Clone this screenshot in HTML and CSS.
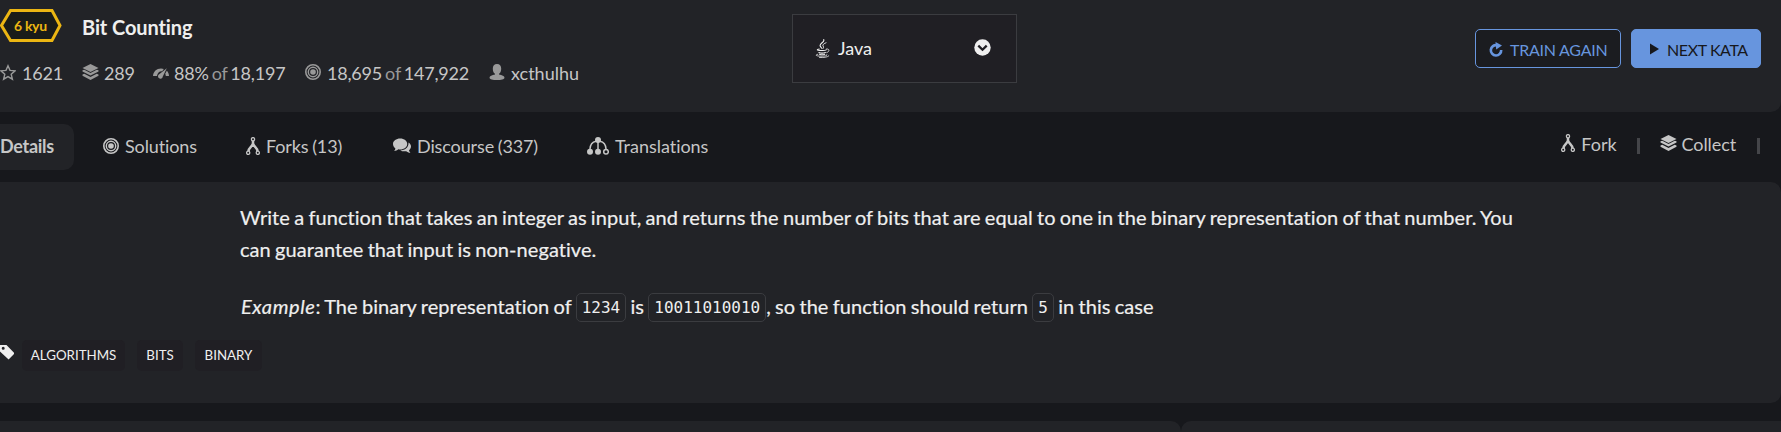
FILE: index.html
```html
<!DOCTYPE html>
<html lang="en">
<head>
<meta charset="utf-8">
<title>Bit Counting</title>
<link rel="stylesheet" href="styles.css">
</head>
<body>
<svg class="defs" width="0" height="0">
  <symbol id="layers" viewBox="0 0 17 16"><path d="M8.500 0L16.500 4L8.500 8L.5 4Z"/><path d="M.5 6.300L2.300 5.700L8.500 8.900L14.700 5.700L16.500 6.300V7.500L8.500 11.500L.5 7.500Z"/><path d="M.5 10.500L2.300 9.700L8.500 12.900L14.700 9.700L16.500 10.500V11.800L8.500 16L.5 11.800Z"/></symbol>
  <symbol id="target" viewBox="0 0 16 16"><g fill="none" stroke="currentColor"><circle cx="8" cy="8" r="7.200" stroke-width="1.600"/><circle cx="8" cy="8" r="4.700" stroke-width="1.400"/></g><circle cx="8" cy="8" r="2.800"/></symbol>
  <symbol id="fork" viewBox="0 0 14 18"><g fill="none" stroke="currentColor"><circle cx="7" cy="2.200" r="1.600" stroke-width="1.300"/><circle cx="2.200" cy="15.800" r="1.600" stroke-width="1.300"/><circle cx="11.800" cy="15.800" r="1.600" stroke-width="1.300"/><path stroke-width="2.500" d="M7 4V8M6.700 7C6.200 9.500 2.800 10.500 2.500 14M7.300 7C7.800 9.500 11.200 10.500 11.500 14"/></g></symbol>
</svg>

<header class="panel top">
  <div class="summary">
    <div class="heading">
      <div class="rank">
        <svg class="hex" width="62" height="33" viewBox="0 0 62 33"><path d="M10.500 1.500H52L60 16.500L52 31.500H10.500L1.500 16.500Z" fill="#1a1c19" stroke="#ecb613" stroke-width="3"/></svg>
        <span class="rank-text">6 kyu</span>
      </div>
      <h1 class="title">Bit Counting</h1>
    </div>
    <div class="stats">
      <span class="stat s1"><svg class="icon" width="16" height="17" viewBox="0 0 16 17"><path fill="none" stroke="currentColor" stroke-width="1.400" d="M8 1.800L10 6.400L15 6.900L11.200 10.200L12.400 15.200L8 12.600L3.600 15.200L4.800 10.200L1 6.900L6 6.400Z"/></svg><span class="num">1621</span></span>
      <span class="stat s2"><svg class="icon" width="17" height="16"><use href="#layers"/></svg><span class="num">289</span></span>
      <span class="stat s3"><svg class="icon" width="16" height="16" viewBox="0 0 16 16"><path d="M0 12C.3 7.500 3.600 4.500 8 4.500C9 4.500 10 4.700 10.800 5L9.200 7.200C6.500 6.900 4.500 8.500 4 12Z"/><path d="M13.800 4.300L9.800 12.500A2.400 2.400 0 1 1 6.200 10.200Z"/><path d="M13.800 6.700C15.200 8 16 10 16 12H12.800C12.700 11 12.500 10.300 12.200 9.700Z"/></svg><span class="num">88% <i>of</i> 18,197</span></span>
      <span class="stat s4"><svg class="icon" width="16" height="16"><use href="#target"/></svg><span class="num">18,695 <i>of</i> 147,922</span></span>
      <span class="stat"><svg class="icon user" width="16" height="16" viewBox="0 0 16 16"><path d="M8 0C10.800 0 12.200 1.800 12.200 4.500C12.200 7 11.500 9 10 9.700V10.600C13 11.300 15.500 12 15.500 13.700C15.500 15.400 12 16 8 16S.5 15.400 .5 13.700C.5 12 3 11.300 6 10.600V9.700C4.500 9 3.800 7 3.800 4.500C3.800 1.800 5.200 0 8 0Z"/></svg><span>xcthulhu</span></span>
    </div>
  </div>
  <div class="select">
    <svg class="java" width="15" height="19" viewBox="0 0 15 19"><g fill="none" stroke="currentColor" stroke-linecap="round"><path stroke-width="1.100" d="M8.700 .6C10.200 3 4 4.500 5.200 7C5.600 8 6.500 8.500 6.800 9.300"/><path stroke-width="1" d="M11 3.800C9 4.600 7.200 5.800 8.200 7.200C8.900 8.200 8.500 9 7.900 9.600"/><path stroke-width="1.100" d="M4.300 10C1.200 10.500 2 11.500 5 11.500H8C9.500 11.500 10.700 11.200 11.200 10.900M3.900 13.500C5.500 14.200 8.500 14.200 10.400 13.500M4.500 15.200C6 15.800 8.500 15.800 9.700 15.200"/><path stroke-width=".8" d="M11.500 10C14.800 9.400 14.800 12.800 11.800 13.600M2.800 15.300C-.8 16 1.500 17.200 6 17.200C11 17.200 12.800 16.500 11.800 15.500M4.500 18.500C8.500 18.700 12.500 18.300 13.800 16.900"/></g></svg>
    <span class="lang">Java</span>
    <svg class="chev" width="17" height="17" viewBox="0 0 17 17"><circle cx="8.500" cy="8.500" r="8.200"/><path d="M4.300 6.600L8.500 10.700L12.700 6.600" fill="none" stroke="#201f24" stroke-width="2.300"/></svg>
  </div>
  <div class="actions">
    <button class="btn outline"><svg width="14" height="15" viewBox="0 0 14 15"><path fill="none" stroke="currentColor" stroke-width="2.600" d="M8 3.200A5.200 5.200 0 1 0 12.200 8"/><path d="M6.500 0L13 3.600L7.200 7.400Z"/></svg><span>TRAIN AGAIN</span></button>
    <button class="btn solid"><svg width="9" height="12" viewBox="0 0 9 12"><path d="M0 .5L9 6L0 11.500Z"/></svg><span>NEXT KATA</span></button>
  </div>
</header>

<nav class="tabs">
  <a class="tab active"><span>Details</span></a>
  <a class="tab t2"><svg class="icon" width="16" height="16"><use href="#target"/></svg><span>Solutions</span></a>
  <a class="tab t3"><svg class="icon" width="14" height="18"><use href="#fork"/></svg><span>Forks (13)</span></a>
  <a class="tab t4"><svg class="icon" width="18" height="16" viewBox="0 0 18 16"><path d="M7.200 .5C11.200 .5 14.200 2.900 14.200 6S11.200 11.500 7.200 11.500C6.500 11.500 5.900 11.400 5.300 11.300C4.200 12.300 2.800 12.900 1 13C1.800 12.300 2.300 11.500 2.400 10.400C1 9.400 0 7.800 0 6C0 2.900 3.200 .5 7.200 .5Z"/><path d="M15.500 4.500C17 5.500 18 6.900 18 8.500C18 10 17.200 11.300 16 12.200C16.100 13.200 16.600 14 17.400 14.700C15.600 14.700 14.200 14.100 13.200 13.200C10.800 13.600 8.700 13.200 7.200 12.400C12 12.300 15.800 9.500 15.500 4.500Z"/></svg><span>Discourse (337)</span></a>
  <a class="tab t5"><svg class="icon" width="22" height="18" viewBox="0 0 22 18"><circle cx="11" cy="3" r="3"/><circle cx="3" cy="14.700" r="3"/><circle cx="11" cy="14.700" r="3"/><g fill="none" stroke="currentColor" stroke-width="1.500"><circle cx="19" cy="14.700" r="2.300"/><path d="M11 4V13M9 4.200C5 5 3.200 7 3 12M13 4.200C17 5 18.800 7 19 12"/></g></svg><span>Translations</span></a>
  <div class="tools">
    <a class="tool"><svg class="icon" width="14" height="18"><use href="#fork"/></svg><span>Fork</span></a>
    <span class="bar"></span>
    <a class="tool collect"><svg class="icon" width="17" height="16"><use href="#layers"/></svg><span>Collect</span></a>
    <span class="bar"></span>
  </div>
</nav>

<main class="panel details">
  <div class="description">
    <p>Write a function that takes an integer as input, and returns the number of bits that are equal to one in the binary representation of that number. You can guarantee that input is non-negative.</p>
    <p><em>Example</em>: The binary representation of <code>1234</code> is <code>10011010010</code>, so the function should return <code>5</code> in this case</p>
  </div>
  <div class="tags">
    <svg class="icon" width="14" height="15" viewBox="0 0 14 15"><path fill-rule="evenodd" d="M0 0H6.500L14 7.800V9L8.600 14.500L0 6.500ZM3.200 1.800A1.500 1.500 0 1 0 3.200 4.800A1.500 1.500 0 0 0 3.200 1.800Z"/></svg>
    <span class="tag g1">ALGORITHMS</span><span class="tag g2">BITS</span><span class="tag g3">BINARY</span>
  </div>
</main>

<div class="bottom"><section class="panel left"></section><section class="panel right"></section></div>
</body>
</html>
```

FILE: styles.css
```css
* { box-sizing: border-box; }
body {
  margin: 0;
  height: 432px;
  overflow: hidden;
  background: #17181c;
  color: #efefef;
  font: 18px/24px Lato, "Liberation Sans", sans-serif;
  font-variant-ligatures: none;
}
svg { display: block; flex: none; fill: currentColor; }
.defs { position: absolute; }
.panel { background: #222327; }

.top { display: flex; height: 112px; border-bottom-right-radius: 10px; }
.summary { width: 792px; }
.heading { display: flex; padding-top: 9px; height: 61px; }
.rank { position: relative; width: 82px; height: 33px; color: #ecb613; }
.hex { position: absolute; left: 0; top: 0; }
.rank-text { position: absolute; left: 14px; top: 5px; font-size: 14px; font-weight: 700; letter-spacing: -.3px; }
.title { margin: 6px 0 0; font-size: 20px; line-height: 24px; font-weight: 700; letter-spacing: -.1px; }
.stats { display: flex; height: 24px; color: #c6c6c6; white-space: nowrap; }
.stat { display: flex; align-items: center; gap: 5px; }
.stat .icon { color: #999; margin-top: -2px; }
.stat i { font-style: normal; color: #999; }
.num { letter-spacing: -.2px; word-spacing: -1.4px; }
.s1 { width: 82px; gap: 6px; }
.s2 { width: 71px; }
.s3 { width: 152px; }
.s4 { width: 184px; }
.s4 .icon, .stat .user { margin-right: 1px; }

.select {
  display: flex;
  align-items: center;
  width: 225px;
  height: 69px;
  margin-top: 14px;
  padding: 0 25px 0 23px;
  background: #201f24;
  border: 1px solid #3b3c40;
}
.java { margin: -1px 0 0 -1px; }
.lang { margin: -2px 0 0 8px; }
.chev { margin: -3px 0 0 auto; }

.actions { display: flex; gap: 10px; margin: 29px 20px 0 auto; }
.btn {
  display: flex;
  align-items: center;
  height: 39px;
  border: 1px solid #6795de;
  border-radius: 5px;
  font: 16px/20px Lato, sans-serif;
  letter-spacing: -.25px;
  white-space: nowrap;
}
.outline { width: 146px; padding: 2px 0 0 13px; gap: 7px; background: #1b1c20; color: #6795de; }
.solid { width: 130px; padding: 2px 0 0 18px; gap: 8px; background: #6795de; color: #17181c; letter-spacing: -.4px; }
.solid svg { margin-top: -1px; }

.tabs { display: flex; height: 70px; padding-top: 12px; color: #c6c6c6; white-space: nowrap; }
.tab { display: flex; align-items: center; height: 46px; gap: 6px; letter-spacing: -.12px; word-spacing: -.8px; }
.tab span { margin-top: -2px; }
.tab .icon, .tool .icon { margin-top: -2px; }
.active { width: 74px; margin-right: 29px; background: #222327; border-radius: 0 10px 10px 0; font-weight: 700; letter-spacing: -.3px; }
.t2 { width: 143px; }
.t3 { width: 147px; }
.t4 { width: 194px; }
.t5 { letter-spacing: -.03px; }
.tools { display: flex; align-items: center; height: 40px; margin: 0 21px 0 auto; }
.tool { display: flex; align-items: center; gap: 6px; }
.collect { gap: 5px; letter-spacing: -.1px; }
.bar { width: 3px; height: 16px; background: #444549; margin: 4px 0 0 20px; }
.bar + .tool { margin-left: 20px; }
.collect + .bar { margin-left: 21px; }

.details { height: 221px; padding-top: 19px; border-radius: 0 10px 10px 0; }
.description {
  width: 1300px;
  margin-left: 240px;
  font-size: 20px;
  line-height: 32px;
  letter-spacing: .06px;
  word-spacing: -.95px;
  -webkit-text-stroke: .2px currentColor;
}
.description p { margin: 0 0 25px; }
em { margin-left: 1px; letter-spacing: .6px; }
code {
  position: relative;
  top: -1px;
  padding: 4px 5px;
  border: 1px solid #3b3c40;
  border-radius: 5px;
  font: 16px/20px "DejaVu Sans Mono", monospace;
  letter-spacing: 0;
  -webkit-text-stroke: 0;
}
.tags { display: flex; margin-top: -7px; font-size: 13.33px; }
.tags .icon { margin: 5px 8px 0 0; }
.tag { height: 31px; line-height: 30px; border-radius: 5px; background: #201f24; text-align: center; }
.g1 { width: 103px; margin-right: 12px; }
.g2 { width: 46px; margin-right: 12px; }
.g3 { width: 67px; }

.bottom { display: flex; height: 11px; margin-top: 18px; }
.left { width: 1181px; border-top-right-radius: 10px; }
.right { flex: 1; border-top-left-radius: 10px; }
```
